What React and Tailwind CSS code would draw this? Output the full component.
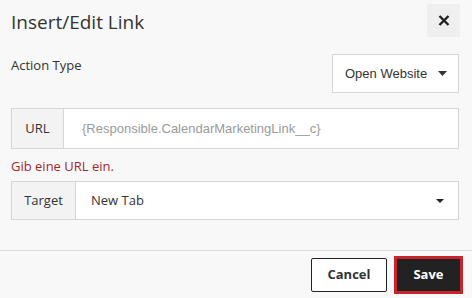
export default function App() {
  const seg = { fontFamily: '"Open Sans", "Noto Sans", sans-serif' };
  return (
    <div className="w-[472px] h-[298px] bg-[#f8f8f8] overflow-hidden text-[#333]" style={seg}>
      {/* Header */}
      <div className="flex items-start justify-between pl-[11px] pr-[12px] pt-[4px] h-[50px]">
        <div className="text-[19px] leading-[26px] mt-[5px] text-[#333]">Insert/Edit Link</div>
        <button className="w-[33px] h-[33px] bg-[#efefef] flex items-center justify-center">
          <svg width="12" height="11" viewBox="0 0 12 11">
            <path d="M1.5 1L10.5 10M10.5 1L1.5 10" stroke="#222" strokeWidth="2.4" />
          </svg>
        </button>
      </div>
      {/* Action Type */}
      <div className="flex items-start justify-between pl-[11px] pr-[13px] mt-[4px]">
        <div className="text-[13px] leading-[18px] mt-[2px]">Action Type</div>
        <div className="w-[127px] h-[39px] bg-white border border-[#d6d6d6] flex items-center pl-[12px] pr-[11px] justify-between">
          <span className="text-[13px] text-[#333]" style={{ fontFamily: '"Liberation Sans", Arial, sans-serif' }}>Open Website</span>
          <svg width="9" height="5" viewBox="0 0 9 5"><path d="M0 0H9L4.5 5Z" fill="#333" /></svg>
        </div>
      </div>
      {/* URL group */}
      <div className="mx-[11px] mr-[13px] mt-[15px] h-[41px] flex border border-[#d6d6d6] bg-white">
        <div className="w-[52px] bg-[#f3f3f3] border-r border-[#d6d6d6] flex items-center justify-center text-[13px]">URL</div>
        <div className="flex-1 flex items-center pl-[18px] text-[13px] text-[#9a9a9a]" style={{ fontFamily: '"Liberation Sans", Arial, sans-serif' }}>
          {"{Responsible.CalendarMarketingLink__c}"}
        </div>
      </div>
      {/* Error */}
      <div className="pl-[11px] mt-[8px] text-[13px] leading-[18px] text-[#a4262c]">Gib eine URL ein.</div>
      {/* Target */}
      <div className="mx-[11px] mr-[13px] mt-[6px] h-[39px] flex border border-[#d6d6d6] bg-white">
        <div className="w-[64px] bg-[#f3f3f3] border-r border-[#d6d6d6] flex items-center justify-center text-[13px]">Target</div>
        <div className="flex-1 flex items-center justify-between pl-[15px] pr-[14px] text-[13px]">
          <span>New Tab</span>
          <svg width="8" height="4" viewBox="0 0 8 4"><path d="M0 0H8L4 4Z" fill="#222" /></svg>
        </div>
      </div>
      {/* Divider */}
      <div className="mt-[30px] border-t border-[#dcdcdc]" />
      {/* Footer */}
      <div className="flex justify-end items-center gap-[7px] pr-[9px] mt-[5px]">
        <button className="w-[76px] h-[34px] bg-white border border-[#222] rounded-[2px] text-[13px] font-bold text-[#333]">Cancel</button>
        <button className="w-[69px] h-[38px] bg-[#222] border-[3px] border-[#c8242c] text-[13px] font-bold text-white">Save</button>
      </div>
    </div>
  );
}
